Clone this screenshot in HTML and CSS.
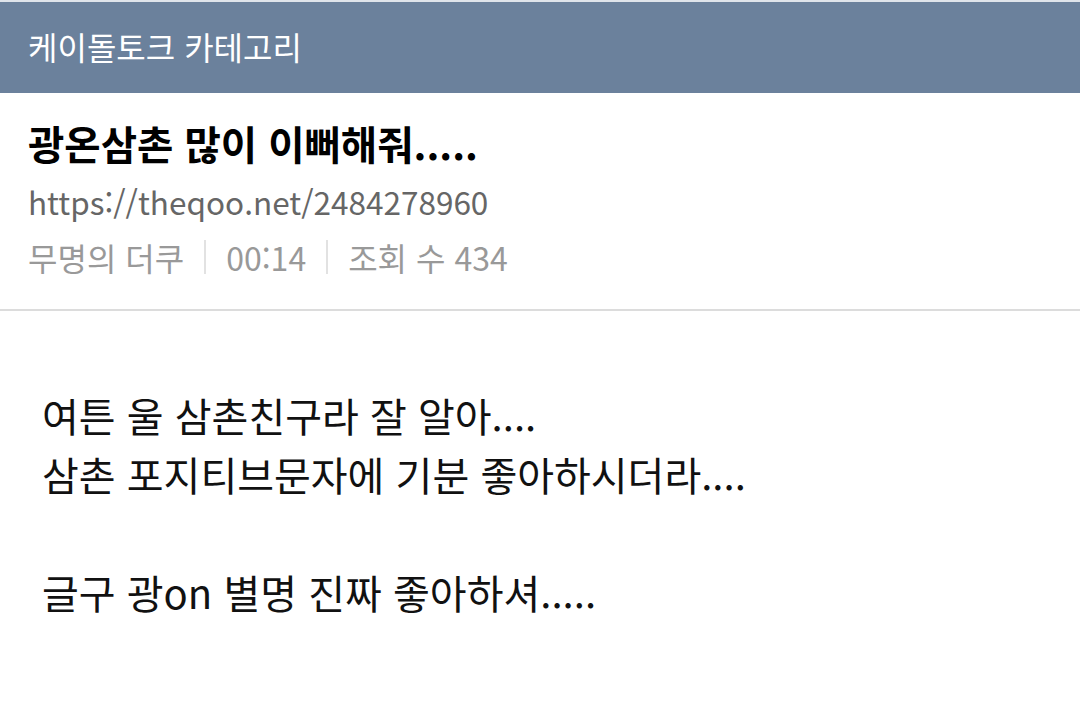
FILE: index.html
```html
<!DOCTYPE html>
<html lang="ko">
<head>
<meta charset="utf-8">
<link rel="stylesheet" href="styles.css">
</head>
<body>
<div class="topline"></div>
<header class="cat">케이돌토크 카테고리</header>
<section class="head">
  <h1 class="title">광온삼촌 많이 이뻐해줘.....</h1>
  <div class="url">https://theqoo.net/2484278960</div>
  <div class="meta"><span>무명의 더쿠</span><i class="sep"></i><span>00:14</span><i class="sep"></i><span>조회 수 434</span></div>
</section>
<article class="body">
  <p>여튼 울 삼촌친구라 잘 알아....</p>
  <p>삼촌 포지티브문자에 기분 좋아하시더라....</p>
  <p>&nbsp;</p>
  <p>글구 광on 별명 진짜 좋아하셔.....</p>
</article>
</body>
</html>
```
FILE: styles.css
```css
html, body { margin: 0; padding: 0; background: #fff; }
body { font-family: "Noto Sans CJK KR", "Noto Sans", sans-serif; width: 1080px; overflow: hidden; }
.topline { height: 2px; background: #dfe4ea; }
.cat { height: 91px; box-sizing: border-box; padding: 0 0 3px 28px; background: #6b819c; color: #fff; font-size: 32px; display: flex; align-items: center; }
.head { padding: 20px 28px 0; border-bottom: 2px solid #dcdcdc; height: 218px; box-sizing: border-box; }
.title { margin: 0; font-size: 39.5px; font-weight: 700; color: #000; line-height: 60px; }
.url { font-size: 31.5px; color: #666; line-height: 56px; }
.meta { font-size: 32px; color: #999; line-height: 56px; display: flex; align-items: center; }
.sep { display: inline-block; width: 2px; height: 34px; background: #e2e2e2; margin: 0 20px 0 20px; }
.body { padding: 75px 42px 0; }
.body p { margin: 0; font-size: 40px; line-height: 59px; color: #111; }
```
